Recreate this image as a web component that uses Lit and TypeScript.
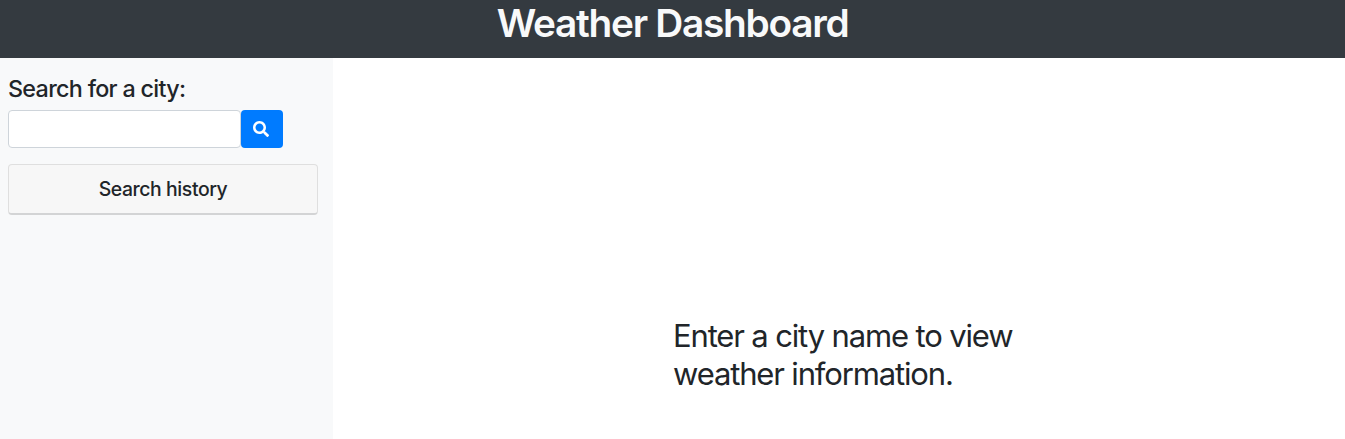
import { LitElement, html, css } from "lit";
import { customElement } from "lit/decorators.js";

@customElement("app-root")
export class AppRoot extends LitElement {
  static styles = css`
    :host { display: flex; flex-direction: column; height: 439px; overflow: hidden; background: #fff; color: #212529; font: 400 16px/1.5 Inter, "Liberation Sans", sans-serif; }
    * { box-sizing: border-box; }
    h1, h4, h5 { margin: 0; font-weight: 500; white-space: nowrap; }
    header { height: 58px; flex: none; background: #343a40; color: #f8f9fa; display: flex; justify-content: center; }
    h1 { font-size: 38.8px; font-weight: 600; line-height: 46px; letter-spacing: -1.28px; }
    .body { flex: 1; display: flex; }
    aside { width: 333px; flex: none; background: #f8f9fa; padding: 16px 15px 0 8px; }
    h4 { font-size: 23.3px; line-height: 29px; letter-spacing: -0.68px; }
    .search { display: flex; margin: 7px 0 16px; }
    input { width: 233px; height: 38px; border: 1px solid #ced4da; border-radius: 4px; background: #fff; padding: 6px 12px; font: inherit; }
    button { width: 42px; height: 38px; border: 0; border-radius: 4px; background: #007bff; color: #fff; padding: 0 2px 0 0; display: flex; align-items: center; justify-content: center; }
    .card { height: 51px; border: 1px solid #dfdfdf; border-bottom: 2px solid #d3d4d5; border-radius: 4px; background: #f7f7f7; display: flex; justify-content: center; padding-top: 12px; }
    h5 { font-size: 19.4px; line-height: 24px; letter-spacing: -0.4px; }
    main { padding: 259px 0 0 340px; }
    .message { margin: 0; font-size: 31px; line-height: 38px; letter-spacing: -1.15px; white-space: nowrap; }
  `;

  render() {
    return html`
      <header><h1>Weather Dashboard</h1></header>
      <div class="body">
        <aside>
          <h4>Search for a city:</h4>
          <div class="search">
            <input type="text" aria-label="City" />
            <button aria-label="Search">
              <svg width="16" height="16" viewBox="0 0 512 512" fill="currentColor"><path d="M505 442.7L405.3 343c-4.500-4.500-10.600-7-17-7H372c27.600-35.300 44-79.700 44-128C416 93.100 322.900 0 208 0S0 93.100 0 208s93.100 208 208 208c48.300 0 92.700-16.400 128-44v16.300c0 6.400 2.500 12.500 7 17l99.700 99.700c9.400 9.400 24.600 9.400 33.900 0l28.300-28.300c9.400-9.400 9.400-24.600.1-34zM208 336c-70.700 0-128-57.200-128-128 0-70.700 57.200-128 128-128 70.700 0 128 57.200 128 128 0 70.700-57.200 128-128 128z"/></svg>
            </button>
          </div>
          <div class="card"><h5>Search history</h5></div>
        </aside>
        <main><p class="message">Enter a city name to view<br />weather information.</p></main>
      </div>
    `;
  }
}
